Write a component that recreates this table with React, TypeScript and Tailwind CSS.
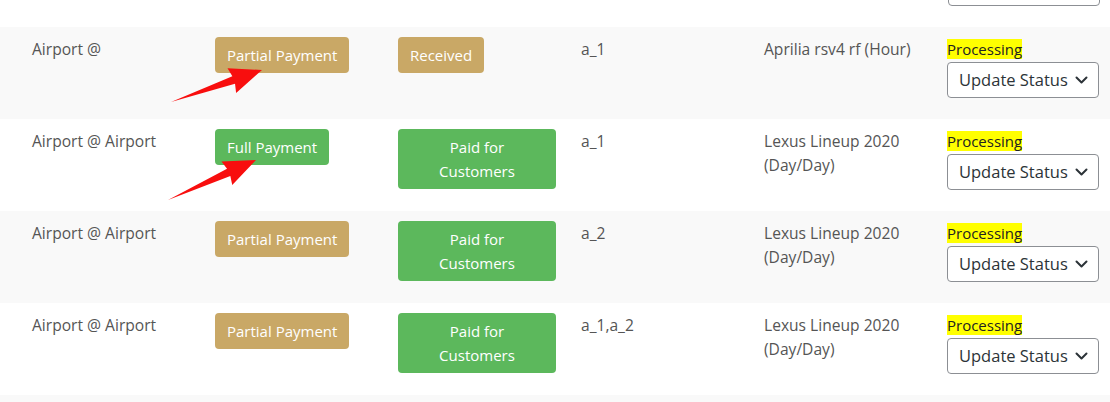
import React from "react"

type Row = {
  route: string
  payment: "partial" | "full"
  status: string
  items: string
  vehicle: string
  bg: string
}

const rows: Row[] = [
  { route: "Airport @", payment: "partial", status: "Received", items: "a_1", vehicle: "Aprilia rsv4 rf (Hour)", bg: "bg-[#f9f9f9]" },
  { route: "Airport @ Airport", payment: "full", status: "Paid for Customers", items: "a_1", vehicle: "Lexus Lineup 2020 (Day/Day)", bg: "bg-white" },
  { route: "Airport @ Airport", payment: "partial", status: "Paid for Customers", items: "a_2", vehicle: "Lexus Lineup 2020 (Day/Day)", bg: "bg-[#f9f9f9]" },
  { route: "Airport @ Airport", payment: "partial", status: "Paid for Customers", items: "a_1,a_2", vehicle: "Lexus Lineup 2020 (Day/Day)", bg: "bg-white" },
]

// red annotation arrow: thin tail widening into a triangular head
function arrow(tx: number, ty: number, hx: number, hy: number) {
  const dx = hx - tx
  const dy = hy - ty
  const len = Math.hypot(dx, dy)
  const ux = dx / len
  const uy = dy / len
  const nx = -uy
  const ny = ux
  const headLen = 28
  const headW = 13
  const shaftW = 4
  const bx = hx - ux * headLen
  const by = hy - uy * headLen
  const pts = [
    [tx, ty],
    [bx + nx * shaftW - ux * 2, by + ny * shaftW - uy * 2],
    [bx + nx * headW - ux * 4, by + ny * headW - uy * 4],
    [hx, hy],
    [bx - nx * headW - ux * 4, by - ny * headW - uy * 4],
    [bx - nx * shaftW - ux * 2, by - ny * shaftW - uy * 2],
  ]
  return pts.map((p) => p.join(",")).join(" ")
}

function Chevron() {
  return (
    <svg width="13" height="8" viewBox="0 0 13 8" fill="none">
      <path d="M1.5 1.5 L6.5 6.5 L11.5 1.5" stroke="#2c3338" strokeWidth="2" strokeLinecap="round" strokeLinejoin="round" />
    </svg>
  )
}

function TableRow({ row }: { row: Row }) {
  const payColor = row.payment === "full" ? "bg-[#5cb85c]" : "bg-[#c9a866]"
  const statusColor = row.status === "Received" ? "bg-[#c9a866]" : "bg-[#5cb85c]"
  return (
    <div className={`flex h-[92px] pl-[15px] text-[15px] leading-6 text-[#555] ${row.bg}`}>
      <div className="w-[183px] shrink-0 pl-[17px] pr-2 pt-[10px] text-[15.6px]">{row.route}</div>
      <div className="w-[183px] shrink-0 pl-[17px] pr-2 pt-[10px]">
        <span className={`inline-block rounded-[4px] px-3 py-[6px] text-white ${payColor}`}>
          {row.payment === "full" ? "Full Payment" : "Partial Payment"}
        </span>
      </div>
      <div className="w-[183px] shrink-0 pl-[17px] pr-[8px] pt-[10px]">
        <span className={`inline-block rounded-[4px] px-3 py-[6px] text-center text-white ${statusColor}`}>
          {row.status}
        </span>
      </div>
      <div className="w-[183px] shrink-0 pl-[17px] pr-2 pt-[10px] text-[15.6px]">{row.items}</div>
      <div className="w-[183px] shrink-0 pl-[17px] pr-2 pt-[10px] text-[15.6px]">{row.vehicle}</div>
      <div className="w-[180px] shrink-0 pl-[17px] pt-[10px]">
        <span className="bg-[#ffff00] text-[#222]">Processing</span>
        <div className="mt-[1px] flex h-9 w-[152px] items-center justify-between rounded-[4px] border border-[#8c8f94] bg-white pl-[11px] pr-[10px] text-[16.5px] whitespace-nowrap text-[#2c3338]">
          <span>Update Status</span>
          <Chevron />
        </div>
      </div>
    </div>
  )
}

export default function App() {
  return (
    <div className="relative h-[402px] w-[1110px] overflow-hidden bg-white font-['Open_Sans',sans-serif]">
      {/* tail of the previous row: only its select box reaches into view */}
      <div className="flex h-[27px] justify-end bg-white pr-[10px]">
        <div className="-mt-[30px] h-9 w-[152px] rounded-[4px] border border-[#8c8f94] bg-white" />
      </div>
      {rows.map((r, i) => (
        <TableRow key={i} row={r} />
      ))}
      <div className="h-[92px] bg-[#f9f9f9]" />
      <svg className="pointer-events-none absolute left-0 top-0" width="1110" height="402">
        <polygon points={arrow(171, 102, 262, 70)} fill="#f80e0e" />
        <polygon points={arrow(168, 200, 256, 160)} fill="#f80e0e" />
      </svg>
    </div>
  )
}
